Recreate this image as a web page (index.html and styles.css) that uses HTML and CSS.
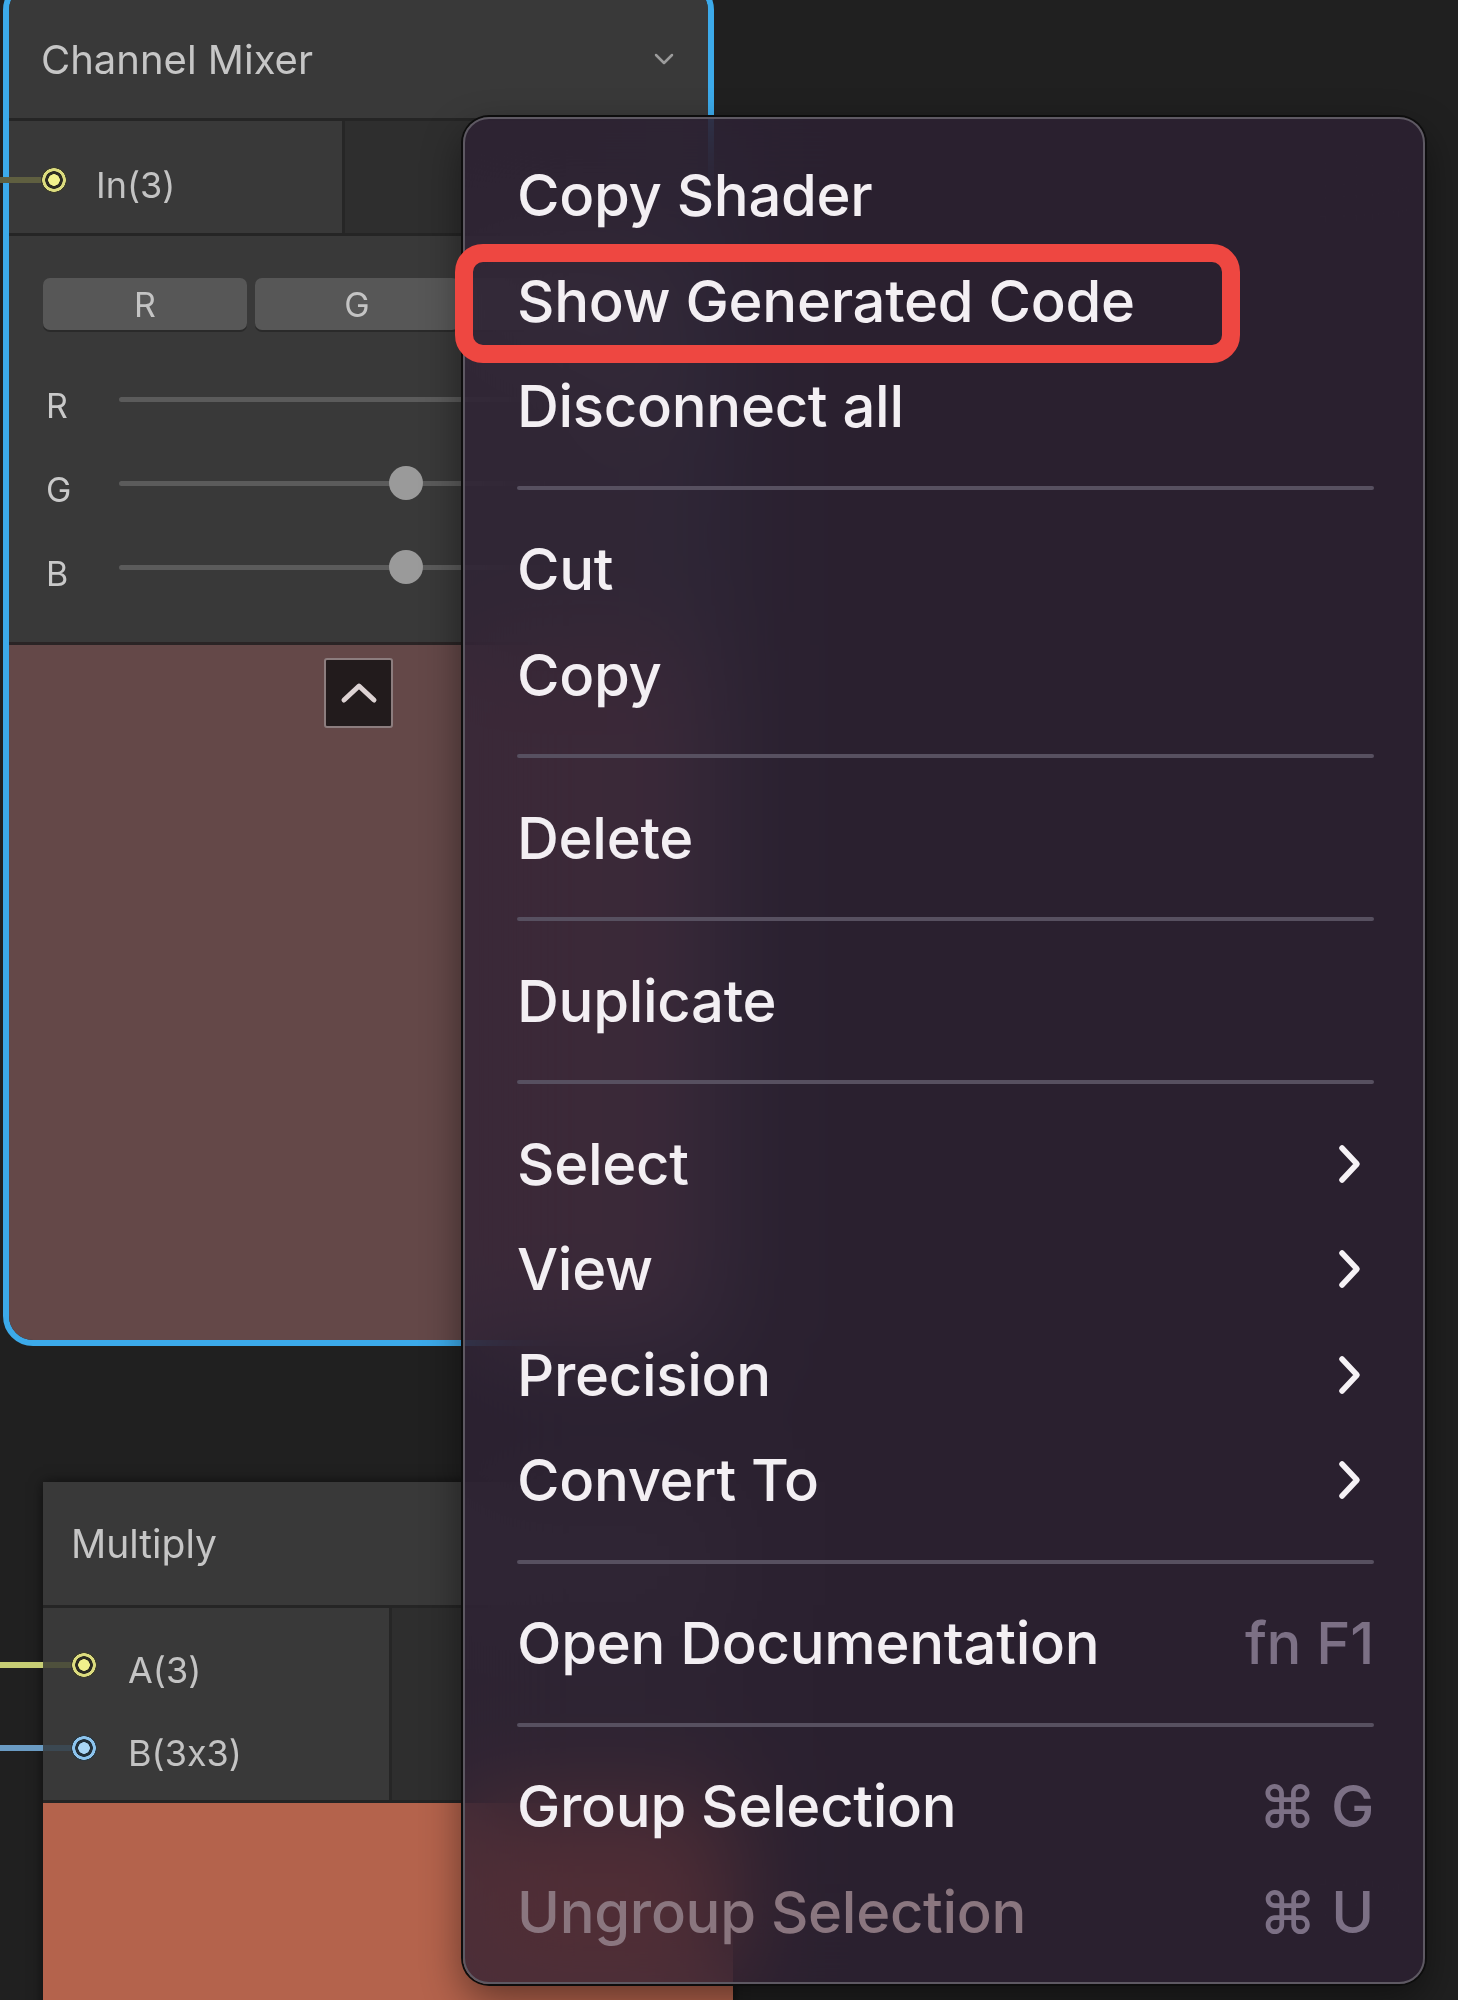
FILE: index.html
```html
<!DOCTYPE html>
<html lang="en">
<head>
<meta charset="utf-8">
<title>Shader Graph context menu</title>
<link rel="stylesheet" href="styles.css">
</head>
<body>
<div class="canvas">
  <div class="node mixer">
    <div class="node-header">
      <span class="title">Channel Mixer</span>
      <svg class="hdr-chev" viewBox="0 0 20 12"><polyline points="2,2 10,10 18,2"/></svg>
    </div>
    <div class="ports">
      <div class="port-col mixer-ports">
        <div class="port-row"><span class="port port-yellow"></span><span class="port-label">In(3)</span></div>
      </div>
      <div class="out-col"></div>
    </div>
    <div class="controls">
      <div class="toggle-row">
        <div class="toggle">R</div>
        <div class="toggle">G</div>
        <div class="toggle">B</div>
      </div>
      <div class="slider-row"><span class="slider-label">R</span><div class="track"><span class="knob" style="left: 96%"></span></div></div>
      <div class="slider-row"><span class="slider-label">G</span><div class="track"><span class="knob" style="left: 52.3%"></span></div></div>
      <div class="slider-row"><span class="slider-label">B</span><div class="track"><span class="knob" style="left: 52.3%"></span></div></div>
    </div>
    <div class="preview mixer-preview">
      <div class="collapse">
        <svg viewBox="0 0 38 22"><polyline points="4,18 19,4 34,18"/></svg>
      </div>
    </div>
  </div>
  <div class="wire wire-in"></div>

  <div class="node multiply">
    <div class="node-header mul-header"><span class="title">Multiply</span></div>
    <div class="ports mul-ports">
      <div class="port-col mul-port-col">
        <div class="port-row mul-row"><span class="port port-yellow"></span><span class="port-label">A(3)</span></div>
        <div class="port-row mul-row"><span class="port port-blue"></span><span class="port-label">B(3x3)</span></div>
      </div>
      <div class="out-col"></div>
    </div>
    <div class="preview mul-preview"></div>
  </div>
  <div class="wire wire-a"></div>
  <div class="wire wire-a-inner"></div>
  <div class="wire wire-b"></div>
  <div class="wire wire-b-inner"></div>

  <div class="context-menu">
    <div class="menu-item"><span>Copy Shader</span></div>
    <div class="menu-item"><span>Show Generated Code</span></div>
    <div class="menu-item"><span>Disconnect all</span></div>
    <div class="menu-sep"></div>
    <div class="menu-item"><span>Cut</span></div>
    <div class="menu-item"><span>Copy</span></div>
    <div class="menu-sep"></div>
    <div class="menu-item"><span>Delete</span></div>
    <div class="menu-sep"></div>
    <div class="menu-item"><span>Duplicate</span></div>
    <div class="menu-sep"></div>
    <div class="menu-item"><span>Select</span><svg class="sub-chev" viewBox="0 0 25 42"><polyline points="5,5 20,21 5,37"/></svg></div>
    <div class="menu-item"><span>View</span><svg class="sub-chev" viewBox="0 0 25 42"><polyline points="5,5 20,21 5,37"/></svg></div>
    <div class="menu-item"><span>Precision</span><svg class="sub-chev" viewBox="0 0 25 42"><polyline points="5,5 20,21 5,37"/></svg></div>
    <div class="menu-item"><span>Convert To</span><svg class="sub-chev" viewBox="0 0 25 42"><polyline points="5,5 20,21 5,37"/></svg></div>
    <div class="menu-sep"></div>
    <div class="menu-item"><span>Open Documentation</span><span class="shortcut">fn F1</span></div>
    <div class="menu-sep"></div>
    <div class="menu-item"><span>Group Selection</span><span class="shortcut">⌘ G</span></div>
    <div class="menu-item disabled"><span>Ungroup Selection</span><span class="shortcut">⌘ U</span></div>
  </div>
  <div class="annotation"></div>
</div>
</body>
</html>
```
FILE: styles.css
```css
html, body {
  margin: 0;
  padding: 0;
}
body {
  background: #202020;
  font-family: "Inter", "Liberation Sans", "DejaVu Sans", sans-serif;
  font-feature-settings: "calt" 0;
}
.canvas {
  position: relative;
  width: 1458px;
  height: 2000px;
  overflow: hidden;
  background: #202020;
}

/* ---------- nodes ---------- */
.node {
  position: absolute;
  display: flex;
  flex-direction: column;
  box-sizing: border-box;
  overflow: hidden;
  background: #2e2e2e;
}
.mixer {
  left: 3px;
  top: -20px;
  width: 711px;
  height: 1366px;
  border: 6px solid #3caaea;
  border-radius: 30px;
}
.node-header {
  height: 135px;
  flex: none;
  box-sizing: border-box;
  padding: 14px 37px 0 32px;
  display: flex;
  align-items: center;
  justify-content: space-between;
  background: #393939;
  border-bottom: 3px solid #252525;
}
.title {
  font-size: 40px;
  color: #c6c6c6;
}
.hdr-chev {
  width: 20px;
  height: 12px;
  margin-right: -3px;
  fill: none;
  stroke: #9b9b9b;
  stroke-width: 2.5;
  stroke-linecap: round;
  stroke-linejoin: round;
}
.ports {
  height: 115px;
  flex: none;
  box-sizing: border-box;
  display: flex;
  border-bottom: 3px solid #252525;
}
.port-col {
  box-sizing: border-box;
  background: #393939;
  border-right: 3px solid #262626;
  display: flex;
  flex-direction: column;
  justify-content: center;
}
.mixer-ports {
  width: 336px;
  padding: 6px 0 0 32px;
}
.out-col {
  flex: 1;
  background: #2e2e2e;
}
.port-row {
  display: flex;
  align-items: center;
  gap: 29px;
}
.port {
  width: 26px;
  height: 26px;
  border-radius: 50%;
  flex: none;
}
.port-yellow {
  background: radial-gradient(circle, #f1f18c 0 5.5px, #2c2c22 6px 8.5px, #dcdc7e 9px 11.5px, #3c3c2c 12px 13px);
}
.port-blue {
  background: radial-gradient(circle, #a9d6f6 0 5.5px, #22303a 6px 8.5px, #8cc4ee 9px 11.5px, #2c3840 12px 13px);
}
.port-label {
  font-size: 36px;
  color: #c3c3c3;
  margin-top: 10px;
}
.controls {
  height: 406px;
  flex: none;
  box-sizing: border-box;
  background: #393939;
  padding-top: 42px;
}
.toggle-row {
  display: flex;
  gap: 8px;
  padding: 0 37px 0 34px;
  margin-bottom: 27px;
}
.toggle {
  flex: 1;
  height: 52px;
  border-radius: 7px;
  background: #575757;
  box-shadow: 0 2px 0 #2a2a2a;
  display: flex;
  align-items: center;
  justify-content: center;
  font-size: 34px;
  color: #c4c4c4;
}
.slider-row {
  height: 84px;
  display: flex;
  align-items: center;
  padding: 0 40px 0 37px;
}
.slider-label {
  width: 73px;
  flex: none;
  font-size: 34px;
  color: #c9c9c9;
  margin-top: 12px;
}
.track {
  flex: 1;
  height: 5px;
  border-radius: 3px;
  background: #5b5b5b;
  position: relative;
}
.knob {
  position: absolute;
  top: 50%;
  width: 34px;
  height: 34px;
  margin: -17px 0 0 -17px;
  border-radius: 50%;
  background: #9a9a9a;
}
.preview {
  flex: 1;
  border-top: 3px solid #2a2425;
}
.mixer-preview {
  background: #644848;
  display: flex;
  justify-content: center;
  align-items: flex-start;
  padding-top: 13px;
}
.collapse {
  width: 69px;
  height: 70px;
  box-sizing: border-box;
  background: #221b1c;
  border: 2px solid #8c7d7e;
  border-radius: 3px;
  display: flex;
  align-items: center;
  justify-content: center;
}
.collapse svg {
  width: 38px;
  height: 22px;
  fill: none;
  stroke: #ddd3d3;
  stroke-width: 5;
  stroke-linecap: round;
  stroke-linejoin: round;
}

/* multiply node */
.multiply {
  left: 43px;
  top: 1482px;
  width: 690px;
  height: 620px;
  box-shadow: 0 0 12px rgba(0, 0, 0, 0.55);
}
.mul-header {
  height: 126px;
  padding: 0 28px;
}
.mul-header .title {
  font-size: 39px;
}
.mul-ports {
  height: 195px;
}
.mul-port-col {
  width: 349px;
  padding: 15.5px 0 0 28px;
  justify-content: flex-start;
}
.mul-row {
  height: 83px;
  gap: 31px;
}
.mul-preview {
  background: #b4634c;
  border-top: none;
}

/* wires */
.wire {
  position: absolute;
  height: 6px;
}
.wire-in {
  left: 0;
  top: 177px;
  width: 41px;
  background: #5f5f40;
}
.wire-a {
  left: 0;
  top: 1662px;
  width: 43px;
  background: #c6cd74;
}
.wire-a-inner {
  left: 43px;
  top: 1662px;
  width: 28px;
  background: #4e503c;
}
.wire-b {
  left: 0;
  top: 1745px;
  width: 43px;
  background: #6a9bc3;
}
.wire-b-inner {
  left: 43px;
  top: 1745px;
  width: 28px;
  background: #3b4852;
}

/* ---------- context menu ---------- */
.context-menu {
  position: absolute;
  left: 463px;
  top: 117px;
  width: 962px;
  height: 1867px;
  box-sizing: border-box;
  padding: 23.5px 49px 0 52px;
  border: 2px solid #5e5963;
  border-radius: 26px;
  background: rgba(46, 33, 52, 0.79);
  -webkit-backdrop-filter: blur(50px) saturate(1.4);
  backdrop-filter: blur(50px) saturate(1.4);
  box-shadow: 0 0 0 2px #0d0d0d, 0 16px 40px rgba(0, 0, 0, 0.45);
}
.menu-item {
  height: 105.5px;
  display: flex;
  align-items: center;
  justify-content: space-between;
  font-size: 58px;
  font-weight: 500;
  letter-spacing: -0.3px;
  color: #f3eff3;
  white-space: nowrap;
}
.menu-sep {
  height: 57.5px;
  display: flex;
  align-items: center;
}
.menu-sep::before {
  content: "";
  flex: 1;
  height: 4px;
  border-radius: 2px;
  background: #575060;
}
.sub-chev {
  width: 25px;
  height: 42px;
  margin-right: 12px;
  fill: none;
  stroke: #f6f2f6;
  stroke-width: 5.5;
  stroke-linecap: round;
  stroke-linejoin: round;
}
.shortcut {
  color: #7c7085;
  font-weight: 500;
}
.disabled {
  color: #8a767f;
}

/* annotation */
.annotation {
  position: absolute;
  left: 455px;
  top: 244px;
  width: 785px;
  height: 119px;
  box-sizing: border-box;
  border: 18px solid #ee4741;
  border-radius: 28px;
}
```
